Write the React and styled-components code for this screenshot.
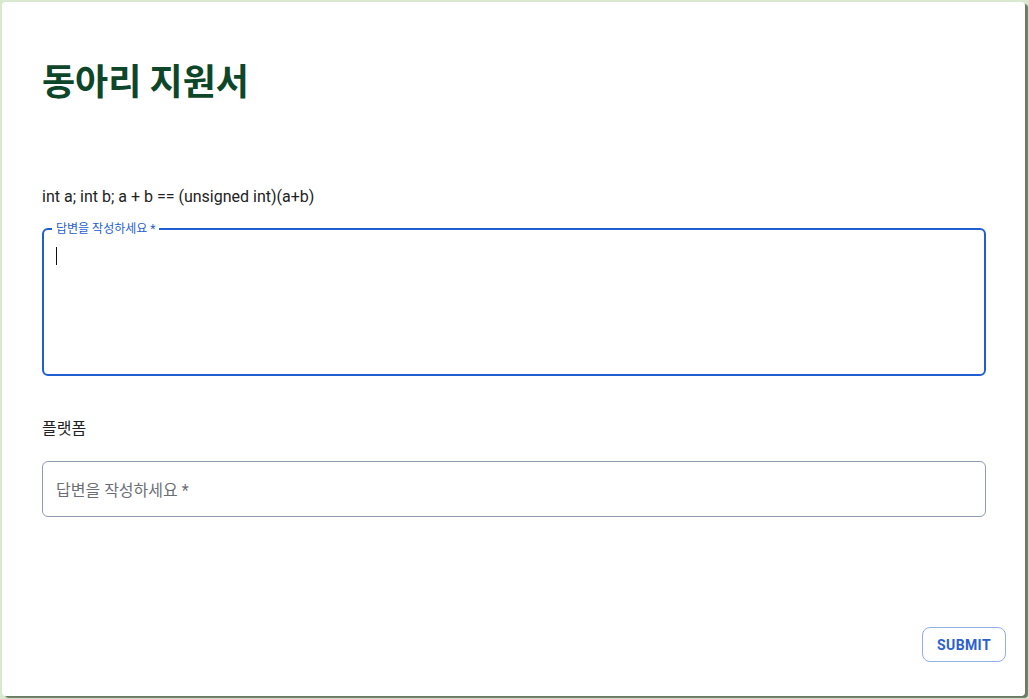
import styled, { createGlobalStyle } from 'styled-components';

const GlobalStyle = createGlobalStyle`
  html, body {
    height: 100%;
  }
  body {
    margin: 0;
    padding: 2px 4px 3px 2px;
    box-sizing: border-box;
    background: #d9e9cf;
    font-family: Roboto, 'Noto Sans CJK KR', sans-serif;
  }
  #root {
    height: 100%;
  }
  * {
    box-sizing: border-box;
  }
`;

const App = () => {
  return (
    <>
      <GlobalStyle />
      <Card>
        <Title>동아리 지원서</Title>
        <Question $top={85} $bottom={19}>int a; int b; a + b == (unsigned int)(a+b)</Question>
        <AreaField>
          <Notch>답변을 작성하세요 *</Notch>
          <Caret />
        </AreaField>
        <Question $top={41} $bottom={20}>플랫폼</Question>
        <InputField>
          <Placeholder>답변을 작성하세요 *</Placeholder>
        </InputField>
        <Footer>
          <SubmitButton>SUBMIT</SubmitButton>
        </Footer>
      </Card>
    </>
  );
};

export default App;

const Card = styled.div`
  height: 100%;
  background: #fff;
  border-radius: 4px;
  box-shadow: 3px 2px 1px #6c7965;
  display: flex;
  flex-direction: column;
  padding: 40px 39px 34px 40px;
`;

const Title = styled.h1`
  margin: 17px 0 0;
  font-family: 'Noto Sans CJK KR', sans-serif;
  font-size: 36px;
  line-height: 41px;
  font-weight: 700;
  color: #0d4628;
`;

const Question = styled.div`
  margin-top: ${({ $top }) => $top}px;
  margin-bottom: ${({ $bottom }) => $bottom}px;
  font-size: 16px;
  line-height: 24px;
  color: #222;
`;

const AreaField = styled.div`
  position: relative;
  height: 148px;
  border: 2px solid #1f5fd1;
  border-radius: 6px;
  padding: 17px 12px;
`;

const Notch = styled.span`
  position: absolute;
  top: -9px;
  left: 8px;
  padding: 0 4px;
  background: #fff;
  font-size: 12px;
  line-height: 16px;
  color: #1f5fd1;
`;

const Caret = styled.span`
  display: block;
  width: 1px;
  height: 18px;
  background: #111;
`;

const InputField = styled.div`
  height: 56px;
  border: 1px solid #8f9bb0;
  border-radius: 6px;
  display: flex;
  align-items: center;
  padding: 0 13px;
`;

const Placeholder = styled.span`
  font-size: 16px;
  color: #6b6e74;
`;

const Footer = styled.div`
  margin-top: auto;
  margin-right: -20px;
  display: flex;
  justify-content: flex-end;
`;

const SubmitButton = styled.button`
  width: 84px;
  height: 35px;
  border: 1px solid #8fb1e8;
  border-radius: 8px;
  background: #fff;
  color: #2b5fcf;
  font-family: Roboto, sans-serif;
  font-size: 14px;
  font-weight: 700;
  letter-spacing: 0.4px;
  cursor: pointer;
`;
